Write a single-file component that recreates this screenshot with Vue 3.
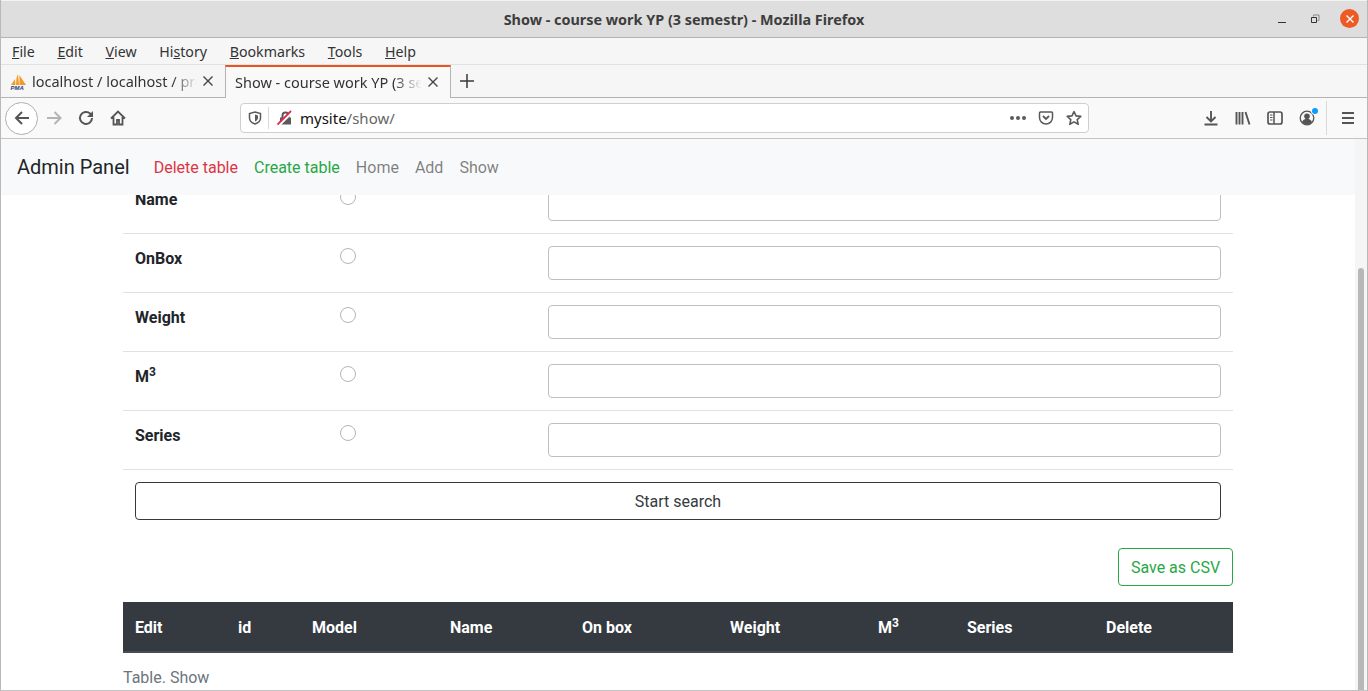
<template>
  <div class="window">
    <div class="titlebar">
      <span class="title">Show - course work YP (3 semestr) - Mozilla Firefox</span>
      <div class="win-buttons">
        <svg class="win-icon" width="16" height="16" viewBox="0 0 16 16"><path d="M4 11.500h8" stroke="#333" stroke-width="1" fill="none" /></svg>
        <svg class="win-icon" width="16" height="16" viewBox="0 0 16 16"><path d="M4.500 6.500h5v5h-5z" stroke="#333" fill="none" /><path d="M6.500 5.500v-1.500h5.500v5.500h-1.500" stroke="#888" fill="none" /></svg>
        <span class="win-close">
          <svg width="10" height="10" viewBox="0 0 10 10"><path d="M1.500 1.500l7 7M8.500 1.500l-7 7" stroke="#fff" stroke-width="1.400" /></svg>
        </span>
      </div>
    </div>

    <div class="menubar">
      <span class="menu-item"><u>F</u>ile</span>
      <span class="menu-item"><u>E</u>dit</span>
      <span class="menu-item"><u>V</u>iew</span>
      <span class="menu-item">Hi<u>s</u>tory</span>
      <span class="menu-item"><u>B</u>ookmarks</span>
      <span class="menu-item"><u>T</u>ools</span>
      <span class="menu-item"><u>H</u>elp</span>
    </div>

    <div class="tabbar">
      <div class="tab">
        <svg class="favicon" width="17" height="17" viewBox="0 0 17 17">
          <path d="M1 12 5 6 5.500 12zM6 12 6.500 5 8 1 9 12zM9.500 12 9.500 2 12 6 16 12z" fill="#f29a26" />
          <text x="0.500" y="16.500" class="pma">PMA</text>
        </svg>
        <span class="tab-title">localhost / localhost / production</span>
        <svg class="tab-close" width="12" height="12" viewBox="0 0 12 12"><path d="M1.500 1.500l9 9M10.500 1.500l-9 9" stroke="#444" stroke-width="1.400" /></svg>
      </div>
      <div class="tab active">
        <span class="tab-title">Show - course work YP (3 semestr) - Mozilla Firefox</span>
        <svg class="tab-close" width="12" height="12" viewBox="0 0 12 12"><path d="M1.500 1.500l9 9M10.500 1.500l-9 9" stroke="#444" stroke-width="1.400" /></svg>
      </div>
      <span class="new-tab">
        <svg width="14" height="14" viewBox="0 0 14 14"><path d="M7 0v14M0 7h14" stroke="#3a3a3a" stroke-width="1.500" /></svg>
      </span>
    </div>

    <div class="toolbar">
      <span class="tool back">
        <svg width="18" height="18" viewBox="0 0 18 18"><path d="M16 9H3M9 3 3 9l6 6" stroke="#555" stroke-width="2" fill="none" /></svg>
      </span>
      <span class="tool">
        <svg width="18" height="18" viewBox="0 0 18 18"><path d="M2 9h13M9.500 3l6 6-6 6" stroke="#b4b4b4" stroke-width="2" fill="none" /></svg>
      </span>
      <span class="tool">
        <svg width="16" height="16" viewBox="0 0 16 16"><path d="M14 8a6 6 0 1 1-1.900-4.400L14 5.500" stroke="#555" stroke-width="2" fill="none" /><path d="M15 1v6H9z" fill="#555" /></svg>
      </span>
      <span class="tool">
        <svg width="16" height="16" viewBox="0 0 16 16"><path d="M1 8.500 8 1.500l7 7M3.500 7v7.500h3.500V10h2v4.500h3.500V7" stroke="#555" stroke-width="1.800" fill="none" /></svg>
      </span>

      <div class="urlbar">
        <svg class="shield" width="14" height="14" viewBox="0 0 14 14"><path d="M7 1 12.500 2.500V7c0 3-2.500 5-5.500 6C4 12 1.500 10 1.500 7V2.500z" stroke="#5a5a5a" stroke-width="1.500" fill="none" /><path d="M7 3.500 10 4.400V7c0 1.600-1.400 2.800-3 3.500z" fill="#5a5a5a" /></svg>
        <span class="url-sep"></span>
        <svg class="lock" width="16" height="16" viewBox="0 0 16 16">
          <path d="M3 7.500h11v7H3z" fill="#5a5a5a" />
          <path d="M5.500 8V5.500a3 3 0 0 1 6 0V8" stroke="#5a5a5a" stroke-width="2" fill="none" />
          <path d="M1.500 15.500 15 2" stroke="#fff" stroke-width="3" />
          <path d="M.5 14.500 14 1" stroke="#e22850" stroke-width="1.800" />
        </svg>
        <span class="url"><span class="url-host">mysite</span>/show/</span>
        <span class="url-dots"><i></i><i></i><i></i></span>
        <svg class="url-icon" width="16" height="16" viewBox="0 0 16 16"><path d="M2.500 2h11A1 1 0 0 1 14.500 3v4.500a6.500 6.500 0 0 1-13 0V3a1 1 0 0 1 1-1z" stroke="#5a5a5a" stroke-width="1.500" fill="none" /><path d="M5 6l3 3 3-3" stroke="#5a5a5a" stroke-width="1.800" fill="none" /></svg>
        <svg class="url-icon" width="16" height="16" viewBox="0 0 16 16"><path d="M8 1.500 10 5.900l4.800.5-3.600 3.200 1 4.700L8 11.900l-4.200 2.400 1-4.700L1.200 6.400 6 5.900z" stroke="#5a5a5a" stroke-width="1.600" stroke-linejoin="round" fill="none" /></svg>
      </div>

      <div class="tool-right">
        <span class="tool">
          <svg width="16" height="16" viewBox="0 0 16 16"><path d="M8 1v10M3.500 7 8 11.500 12.500 7M1.500 14.500h13" stroke="#555" stroke-width="1.900" fill="none" /></svg>
        </span>
        <span class="tool">
          <svg width="16" height="16" viewBox="0 0 16 16"><path d="M1.500 2v12.500M4.500 2v12.500M7.500 2v12.500M10.500 2l4 12.500" stroke="#555" stroke-width="1.900" fill="none" /></svg>
        </span>
        <span class="tool">
          <svg width="16" height="16" viewBox="0 0 16 16"><rect x="1" y="2" width="14" height="12" rx="2" stroke="#555" stroke-width="1.700" fill="none" /><path d="M7 2v12" stroke="#555" stroke-width="1.500" /><path d="M3 5h2.500M3 7.500h2.500M3 10h2.500" stroke="#555" /></svg>
        </span>
        <span class="tool account">
          <svg width="16" height="16" viewBox="0 0 16 16"><circle cx="8" cy="8" r="6.800" stroke="#555" stroke-width="1.300" fill="none" /><circle cx="8" cy="6.300" r="2.800" fill="#555" /><path d="M3 12c1-2.500 3-3 5-3s4 .5 5 3c-1.200 1.500-3 2.200-5 2.200S4.200 13.500 3 12z" fill="#555" /></svg>
          <i class="account-dot"></i>
        </span>
        <span class="tool-sep"></span>
        <span class="tool">
          <svg width="16" height="16" viewBox="0 0 16 16"><path d="M2 3h12M2 8h12M2 13h12" stroke="#555" stroke-width="2" fill="none" /></svg>
        </span>
      </div>
    </div>

    <div class="viewport">
      <div class="page">
        <nav class="navbar">
          <span class="brand">Admin Panel</span>
          <a class="nav-link danger">Delete table</a>
          <a class="nav-link success">Create table</a>
          <a class="nav-link">Home</a>
          <a class="nav-link">Add</a>
          <a class="nav-link">Show</a>
        </nav>

        <div class="scrolled">
          <div class="container">
            <div v-for="field in fields" :key="field" class="row">
              <div class="field-name">
                <template v-if="field === 'M3'">M<sup>3</sup></template>
                <template v-else>{{ field }}</template>
              </div>
              <div class="radio-cell"><input type="radio" class="radio" name="field" /></div>
              <div class="input-cell"><input type="text" class="input" /></div>
            </div>

            <div class="search-row">
              <button class="btn btn-search">Start search</button>
            </div>

            <div class="csv-row">
              <button class="btn btn-csv">Save as CSV</button>
            </div>

            <div class="thead">
              <div v-for="col in columns" :key="col" class="th">
                <template v-if="col === 'M3'">M<sup>3</sup></template>
                <template v-else>{{ col }}</template>
              </div>
            </div>
            <div class="caption">Table. Show</div>
          </div>
        </div>
      </div>
      <div class="scrollbar"><div class="thumb"></div></div>
    </div>
  </div>
</template>

<script setup>
const fields = ['Name', 'OnBox', 'Weight', 'M3', 'Series'];
const columns = ['Edit', 'id', 'Model', 'Name', 'On box', 'Weight', 'M3', 'Series', 'Delete'];
</script>

<style>
html,
body {
  margin: 0;
  height: 100%;
  overflow: hidden;
  background: #fff;
}
</style>

<style scoped>
* {
  box-sizing: border-box;
}

.window {
  width: 1368px;
  height: 691px;
  display: flex;
  flex-direction: column;
  overflow: hidden;
  border-left: 1px solid #b9b9b9;
  border-right: 1px solid #b9b9b9;
  border-bottom: 1px solid #c4c4c4;
  font-family: "Noto Sans", sans-serif;
  color: #333;
}

.titlebar {
  height: 38px;
  flex: none;
  display: flex;
  align-items: center;
  justify-content: center;
  position: relative;
  background: #dedede;
  border-top: 1px solid #f2f2f2;
  border-bottom: 1px solid #b3b3b3;
}

.title {
  font-size: 14.400px;
  font-weight: 700;
  color: #3d3d3d;
}

.win-buttons {
  position: absolute;
  right: 8px;
  top: 8px;
  display: flex;
  align-items: center;
  gap: 17px;
}

.win-close {
  width: 19px;
  height: 19px;
  border-radius: 50%;
  background: #ed5a24;
  display: flex;
  align-items: center;
  justify-content: center;
}

.menubar {
  height: 27px;
  flex: none;
  display: flex;
  align-items: center;
  gap: 22.700px;
  padding-left: 11px;
  background: #f6f6f6;
  border-bottom: 1px solid #e2e2e2;
  font-size: 14.200px;
}

.tabbar {
  height: 33px;
  flex: none;
  display: flex;
  background: #f6f6f6;
  border-bottom: 1px solid #b3b3b3;
  font-size: 14.500px;
}

.tab {
  width: 224px;
  display: flex;
  align-items: center;
  padding: 0 11px 0 9px;
}

.tab.active {
  width: 226px;
  padding: 0 11px 2px 9px;
  background: #f9f9f9;
  border-top: 2px solid #e95420;
  border-left: 1px solid #b3b3b3;
  border-right: 1px solid #b3b3b3;
  margin-bottom: -1px;
}

.favicon {
  flex: none;
  margin-right: 5px;
}

.pma {
  font-family: "Liberation Sans", sans-serif;
  font-size: 6px;
  font-style: italic;
  font-weight: 700;
  fill: #2a3f7a;
}

.tab-title {
  flex: 1;
  min-width: 0;
  white-space: nowrap;
  overflow: hidden;
  -webkit-mask-image: linear-gradient(to right, #000 85%, transparent 100%);
  mask-image: linear-gradient(to right, #000 85%, transparent 100%);
}

.tab-close {
  flex: none;
  margin-left: 5px;
}

.new-tab {
  width: 32px;
  display: flex;
  align-items: center;
  justify-content: center;
}

.toolbar {
  height: 41px;
  flex: none;
  display: flex;
  align-items: center;
  padding-left: 4px;
  background: #f9f9f9;
  border-bottom: 1px solid #c4c4c4;
}

.tool {
  width: 32px;
  height: 32px;
  flex: none;
  display: flex;
  align-items: center;
  justify-content: center;
  position: relative;
}

.back {
  width: 33px;
  height: 33px;
  border: 1px solid #b0b0b0;
  border-radius: 50%;
  background: #fff;
}

.urlbar {
  width: 849px;
  height: 30px;
  margin-left: 106px;
  flex: none;
  display: flex;
  align-items: center;
  padding: 0 6px 0 7px;
  background: #fff;
  border: 1px solid #cfcfcf;
  border-radius: 4px;
}

.url-sep {
  width: 1px;
  height: 22px;
  margin: 0 8px 0 6px;
  background: #d8d8d8;
}

.lock {
  margin-right: 7px;
}

.url {
  flex: 1;
  font-size: 15px;
  color: #666;
}

.url-host {
  color: #111;
}

.url-dots {
  display: flex;
  gap: 2px;
  margin-right: 12px;
}

.url-dots i {
  width: 4px;
  height: 4px;
  border-radius: 50%;
  background: #5a5a5a;
}

.url-icon {
  margin-left: 12px;
}

.url-dots + .url-icon {
  margin-left: 0;
}

.tool-right {
  display: flex;
  align-items: center;
  margin-left: 106px;
}

.account-dot {
  position: absolute;
  top: 6px;
  right: 5px;
  width: 6px;
  height: 6px;
  border-radius: 50%;
  background: #0a9dff;
  box-shadow: 0 0 0 1px #f9f9f9;
}

.tool-sep {
  width: 1px;
  height: 34px;
  margin: 0 5px 0 3px;
  background: #d8d8d8;
}

.viewport {
  flex: 1;
  min-height: 0;
  display: flex;
}

.page {
  flex: 1;
  min-width: 0;
  display: flex;
  flex-direction: column;
  font-family: Roboto, "Liberation Sans", sans-serif;
  font-size: 16px;
  line-height: 24px;
  color: #212529;
}

.navbar {
  height: 56px;
  flex: none;
  display: flex;
  align-items: center;
  padding: 2px 16px 0;
  position: relative;
  z-index: 1;
  background: #f8f9fa;
}

.brand {
  font-size: 20px;
  margin: -2px 16px 0 0;
}

.nav-link {
  padding: 0 8px;
  color: rgba(0, 0, 0, 0.5);
}

.danger {
  color: #dc3545;
}

.success {
  color: #28a745;
}

.scrolled {
  flex: 1;
  min-height: 0;
  overflow: hidden;
}

.container {
  width: 1110px;
  margin: -20px auto 0;
}

.row {
  display: grid;
  grid-template-columns: 205px 208px 1fr;
  padding: 12px 0;
  border-bottom: 1px solid #dee2e6;
}

.field-name {
  padding: 1px 0 0 12px;
  font-weight: 700;
}

sup {
  font-size: 75%;
  line-height: 0;
  position: relative;
  top: -0.5em;
  vertical-align: baseline;
}

.radio-cell {
  padding-left: 12px;
  padding-top: 2px;
}

.radio {
  appearance: none;
  display: block;
  width: 16px;
  height: 16px;
  margin: 0;
  border: 1px solid #b5b5b5;
  border-radius: 50%;
  background: #fff;
}

.input-cell {
  padding: 0 12px;
}

.input {
  display: block;
  width: 100%;
  height: 34px;
  border: 1px solid #bfbfbf;
  border-radius: 4px;
  background: #fff;
}

.search-row {
  padding: 12px 12px 0;
}

.btn {
  display: block;
  height: 38px;
  padding: 2px 0 0;
  border-radius: 4px;
  background: #fff;
  font-family: inherit;
  font-size: 16px;
  line-height: 24px;
}

.btn-search {
  width: 100%;
  border: 1px solid #343a40;
  color: #343a40;
}

.csv-row {
  display: flex;
  justify-content: flex-end;
  margin-top: 28px;
}

.btn-csv {
  width: 115px;
  border: 1px solid #28a745;
  color: #28a745;
}

.thead {
  display: grid;
  grid-template-columns: 103px 74px 138px 132px 148px 148px 89px 139px 1fr;
  height: 51px;
  margin-top: 16px;
  padding-top: 2px;
  align-items: center;
  background: #343a40;
  border-bottom: 2px solid #454d55;
}

.th {
  padding-left: 12px;
  color: #fff;
  font-weight: 700;
}

.caption {
  padding-top: 13px;
  color: #6c757d;
}

.scrollbar {
  width: 12px;
  flex: none;
  background: #f5f5f5;
  padding: 129px 3px 0;
}

.thumb {
  height: 100%;
  border-radius: 3px 3px 0 0;
  background: #b8b8b8;
}
</style>
